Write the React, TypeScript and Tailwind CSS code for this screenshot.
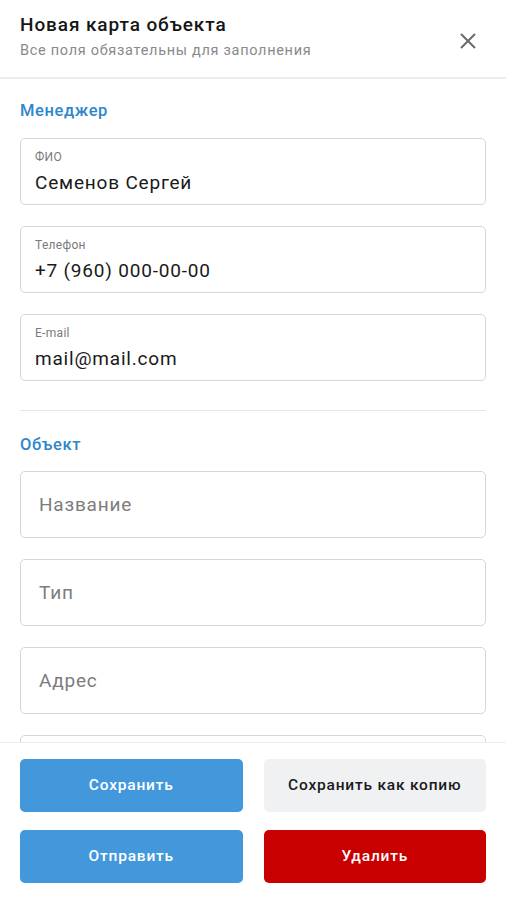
import React from "react"

type FieldProps = { label?: string, value?: string, placeholder?: string }

const Field: React.FC<FieldProps> = ({ label, value, placeholder }) => {
    return (
        <div className="h-[67px] w-full shrink-0 rounded-[5px] border border-[#d6d6d6] bg-white px-[14px] flex flex-col justify-center">
            {label ? (
                <>
                    <p className="text-[12px] leading-[14px] tracking-[0.3px] text-[#7a7a7a]">{label}</p>
                    <p className="mt-[7px] text-[19px] leading-[23px] tracking-[0.8px] text-[#1a1a1a]">{value}</p>
                </>
            ) : (
                <p className="pl-[4px] text-[19px] leading-[23px] tracking-[0.8px] text-[#7c7c7c]">{placeholder}</p>
            )}
        </div>
    )
}

const App: React.FC = () => {
    return (
        <div className="h-[900px] w-full flex flex-col bg-white overflow-hidden" style={{ fontFamily: "Roboto, 'Liberation Sans', sans-serif" }}>
            {/* Шапка */}
            <div className="h-[79px] shrink-0 flex items-start justify-between border-b-[2px] border-[#ececec] px-[20px] pt-[13px]">
                <div>
                    <h1 className="text-[19px] leading-[24px] tracking-[0.9px] font-medium text-[#161616]">Новая карта объекта</h1>
                    <p className="mt-[5px] text-[14.5px] leading-[18px] tracking-[0.7px] text-[#8a8a8a]">Все поля обязательны для заполнения</p>
                </div>
                <button className="mt-[18px] mr-[8px] text-[#6b6b6b]">
                    <svg width="20" height="20" viewBox="0 0 20 20" fill="none" stroke="currentColor" strokeWidth="2">
                        <path d="M3 3L17 17M17 3L3 17" />
                    </svg>
                </button>
            </div>

            {/* Содержимое */}
            <div className="flex-1 overflow-hidden px-[20px]">
                <h2 className="mt-[22px] text-[16.5px] leading-[20px] tracking-[0.6px] font-medium text-[#2e86cc]">Менеджер</h2>
                <div className="mt-[17px] flex flex-col gap-[21px]">
                    <Field label="ФИО" value="Семенов Сергей" />
                    <Field label="Телефон" value="+7 (960) 000-00-00" />
                    <Field label="E-mail" value="mail@mail.com" />
                </div>
                <div className="mt-[29px] h-px bg-[#e6e6e6]" />
                <h2 className="mt-[24px] text-[16.5px] leading-[20px] tracking-[0.6px] font-medium text-[#2e86cc]">Объект</h2>
                <div className="mt-[16px] flex flex-col gap-[21px]">
                    <Field placeholder="Название" />
                    <Field placeholder="Тип" />
                    <Field placeholder="Адрес" />
                    <Field placeholder="" />
                </div>
            </div>

            {/* Кнопки */}
            <div className="h-[158px] shrink-0 border-t border-[#ececec] px-[20px] pt-[16px] grid grid-cols-2 gap-x-[21px] gap-y-[18px] content-start">
                <button className="h-[53px] rounded-[5px] bg-[#4398dc] text-white text-[15.5px] tracking-[0.8px] font-medium">Сохранить</button>
                <button className="h-[53px] rounded-[5px] bg-[#f0f1f2] text-[#1a1a1a] text-[15.5px] tracking-[0.8px] font-medium">Сохранить как копию</button>
                <button className="h-[53px] rounded-[5px] bg-[#4398dc] text-white text-[15.5px] tracking-[0.8px] font-medium">Отправить</button>
                <button className="h-[53px] rounded-[5px] bg-[#c80000] text-white text-[15.5px] tracking-[0.8px] font-medium">Удалить</button>
            </div>
        </div>
    )
}

export default App
